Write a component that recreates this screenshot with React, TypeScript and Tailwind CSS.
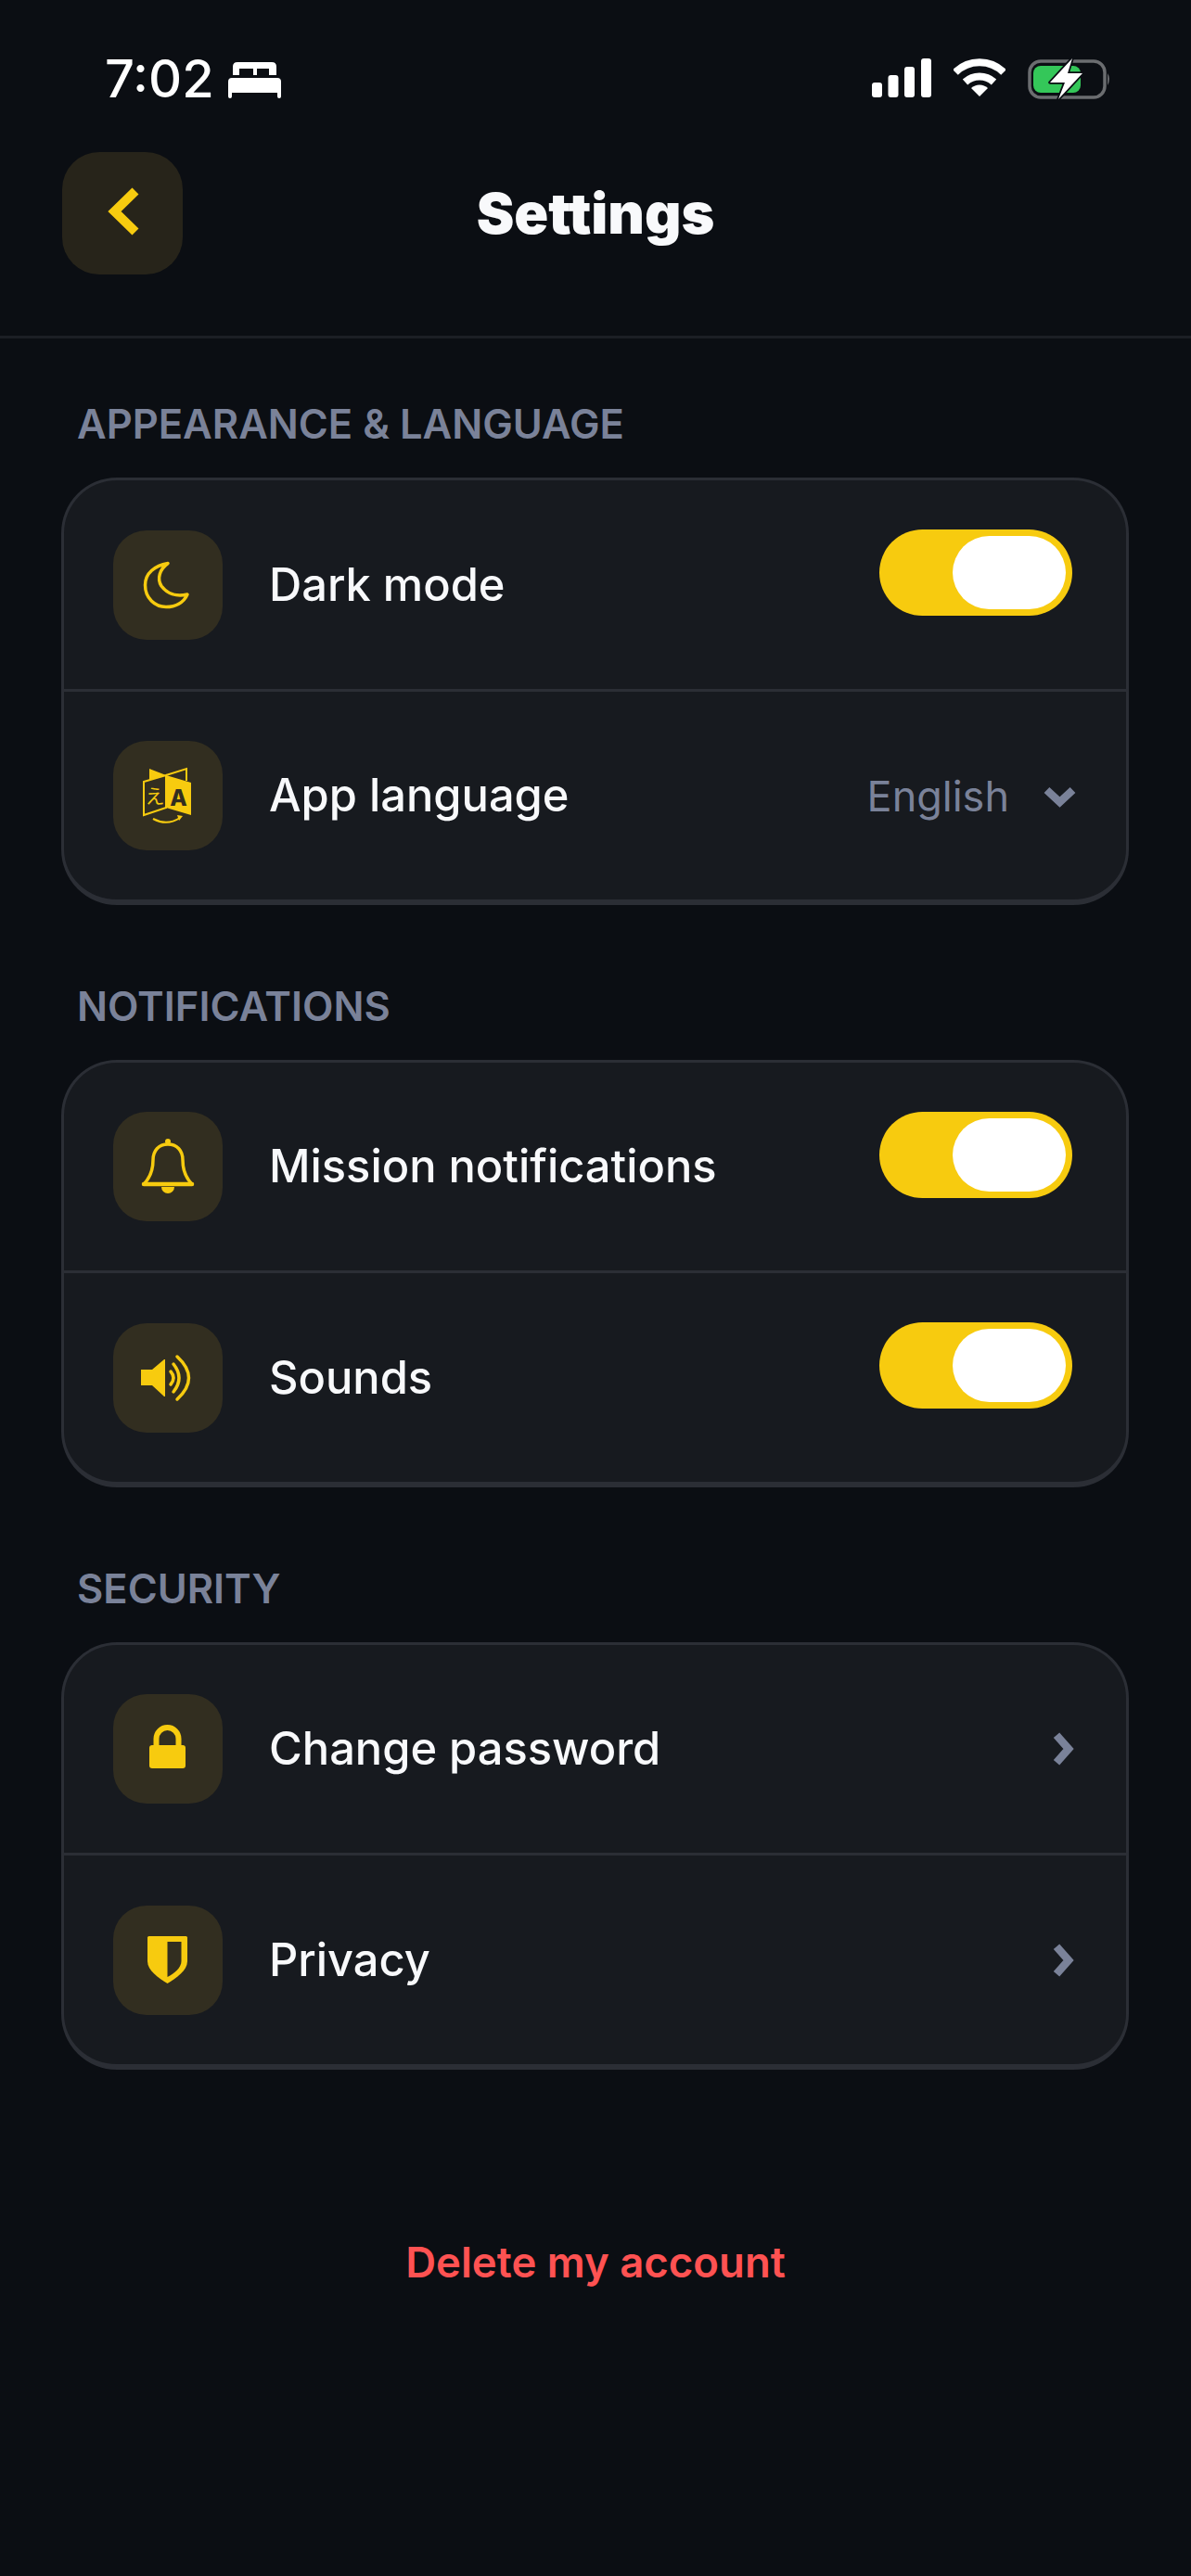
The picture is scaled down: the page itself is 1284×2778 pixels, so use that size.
import React from "react";

const Y = "#f7cb0f";
const BOX = "#322e20";

const MoonIcon = () => (
  <svg viewBox="0 0 118 118" className="w-full h-full" fill="none" stroke={Y} strokeWidth="3.5" strokeLinejoin="round">
    <path d="M59 35.5 C45 38 34.5 46 34.5 59 C34.5 73 45 82.5 57 82.5 C67 82.5 76 78 80 69 C68 72 58 68 52 60 C47 52 50 42 59 35.5 Z" />
  </svg>
);

const LanguageIcon = () => (
  <svg viewBox="0 0 118 118" className="w-full h-full" fill="none">
    <path d="M57 37 L79 30 V43" stroke={Y} strokeWidth="2" />
    <path d="M39 30 L57 37 L39 42 Z" fill={Y} />
    <path d="M33 44 L57 37 V72 L33 80 Z" fill={BOX} stroke={Y} strokeWidth="2" />
    <path d="M57 37 L84 45 V80 L57 72 Z" fill={Y} />
    <text x="70.5" y="70" textAnchor="middle" fontFamily="Inter, sans-serif" fontWeight="800" fontSize="24" fill={BOX}>
      A
    </text>
    <text x="45" y="67" textAnchor="middle" fontFamily="'Noto Sans CJK JP', sans-serif" fontSize="21" fill={Y}>
      え
    </text>
    <path d="M43 84 Q58 92 72 83" stroke={Y} strokeWidth="2" />
    <path d="M69 80 L75 81 L71 86 Z" fill={Y} />
  </svg>
);

const BellIcon = () => (
  <svg viewBox="0 0 118 118" className="w-full h-full" fill="none" stroke={Y} strokeWidth="3.5" strokeLinejoin="round">
    <circle cx="59" cy="32" r="3" fill={Y} stroke="none" />
    <path d="M33 78 C41 70 43 62 43 52 C43 42 49 35 59 35 C69 35 75 42 75 52 C75 62 77 70 85 78 Z" />
    <path d="M33 78 H85" strokeWidth="4.5" strokeLinecap="round" />
    <path d="M52 81 A7 7 0 0 0 66 81 Z" fill={Y} stroke="none" />
  </svg>
);

const SoundIcon = () => (
  <svg viewBox="0 0 118 118" className="w-full h-full" fill="none">
    <path d="M30 50 H42 L55 39 H56 V79 H55 L42 67 H30 Z" fill={Y} />
    <g stroke={Y} strokeWidth="3.5" strokeLinecap="round">
      <path d="M62 52 Q68 59 62 66" />
      <path d="M65 44 Q77 59 65 74" />
      <path d="M69 36 Q94 59 69 82" />
    </g>
  </svg>
);

const LockIcon = () => (
  <svg viewBox="0 0 118 118" className="w-full h-full" fill="none">
    <path d="M46.5 56 V48 A12 12 0 0 1 70.5 48 V56" stroke={Y} strokeWidth="6" />
    <rect x="39" y="55" width="39" height="25" rx="3" fill={Y} />
  </svg>
);

const ShieldIcon = () => (
  <svg viewBox="0 0 118 118" className="w-full h-full">
    <path d="M38.5 33 H78.5 Q80 33 80 34.5 V60 C80 70 68 78 58.5 84 C49 78 37 70 37 60 V34.5 Q37 33 38.5 33 Z" fill={Y} />
    <path d="M58.5 39 H73.5 V60 C73.5 67 66 73 58.5 77 Z" fill={BOX} />
  </svg>
);

const Toggle = () => (
  <div className="flex justify-end items-center w-[208px] h-[93px] mb-[26px] pr-[7px] rounded-full bg-[#f7cb0f]">
    <div className="w-[122px] h-[79px] rounded-full bg-white" />
  </div>
);

const ChevronRight = () => (
  <svg viewBox="0 0 22 36" className="w-[22px] h-[36px] overflow-visible" fill="none" stroke="#7a8299" strokeWidth="8.5" strokeLinejoin="miter">
    <path d="M3 3.3 L16 18 L3 32.7" />
  </svg>
);

const ChevronDown = () => (
  <svg viewBox="0 0 35 23" className="w-[35px] h-[23px] overflow-visible" fill="none" stroke="#7a8299" strokeWidth="8.5" strokeLinejoin="miter">
    <path d="M3.5 4 L17.5 17 L31.5 4" />
  </svg>
);

const Row: React.FC<{ icon: React.ReactNode; label: string; right: React.ReactNode; pr: string; h: string }> = ({ icon, label, right, pr, h }) => (
  <div className={`flex items-center pl-[53px] ${pr} ${h}`}>
    <div className="w-[118px] h-[118px] shrink-0 rounded-[36px] bg-[#322e20]">{icon}</div>
    <span className="ml-[50px] flex-1 text-[48.8px] leading-[60px] font-medium text-[#f8f9fb]">{label}</span>
    {right}
  </div>
);

const Section: React.FC<{ title: string; children: React.ReactNode }> = ({ title, children }) => (
  <section>
    <h2 className="pl-[17px] mb-[34px] text-[43.5px] leading-[48px] font-semibold text-[#7a8299]">{title}</h2>
    <div className="rounded-[60px] border-[3px] border-b-[6px] border-[#2b2e35] bg-[#171a1f]">{children}</div>
  </section>
);

const StatusBar = () => (
  <div className="flex justify-between items-start h-[164px] pt-[63px] pl-[113px] pr-[86px]">
    <div className="flex items-start">
      <span className="text-[56px] leading-[44px] font-medium text-white">7:02</span>
      <svg viewBox="0 0 57 39" className="w-[57px] h-[39px] ml-[15px] mt-[4px]" fill="white">
        <path d="M5 14 V5 Q5 0 10 0 H47 Q52 0 52 5 V14 Z" />
        <rect x="12" y="7" width="15" height="7" fill="#0b0e13" />
        <rect x="31" y="7" width="13" height="7" fill="#0b0e13" />
        <path d="M0 21 Q0 17 4 17 H53 Q57 17 57 21 V37 Q57 39 55 39 Q53 39 53 37 V33 H4 V37 Q4 39 2 39 Q0 39 0 37 Z" />
      </svg>
    </div>
    <div className="flex items-start gap-[24px]">
      <svg viewBox="0 0 64 42" className="w-[64px] h-[42px]" fill="white">
        <rect x="0" y="26" width="11" height="16" rx="3" />
        <rect x="17.5" y="18" width="11" height="24" rx="3" />
        <rect x="35" y="9" width="11" height="33" rx="3" />
        <rect x="53" y="0" width="11" height="42" rx="3" />
      </svg>
      <svg viewBox="0 0 56 42" className="w-[56px] h-[42px]" fill="none" stroke="white" strokeWidth="8">
        <path d="M2 15 A37 37 0 0 1 54 15" />
        <path d="M12.5 25.5 A23 23 0 0 1 43.5 25.5" />
        <path d="M28 41 L19 32 A13 13 0 0 1 37 32 Z" fill="white" stroke="none" />
      </svg>
      <svg viewBox="0 0 90 44" className="w-[90px] h-[44px]" fill="none">
        <rect x="2" y="3" width="81" height="39" rx="12" stroke="#6b6d70" strokeWidth="3.5" />
        <rect x="6" y="8" width="51" height="29" rx="8" fill="#34c759" />
        <path d="M86 16 Q90 22 86 29 Z" fill="#6b6d70" />
        <path d="M48 0 L24 26 H40 L33 44 L59 16 H43 Z" fill="white" stroke="#0b0e13" strokeWidth="3.5" paintOrder="stroke" strokeLinejoin="round" />
      </svg>
    </div>
  </div>
);

export default function App() {
  return (
    <div className="min-h-[2778px] bg-[#0b0e13] font-[Inter,sans-serif]">
      <StatusBar />
      <header className="pb-[66px] px-[67px] grid grid-cols-[130px_1fr_130px] items-center border-b-[3px] border-[#1c1f25]">
        <div className="flex items-center justify-center w-[130px] h-[132px] rounded-[40px] bg-[#27241a]">
          <svg viewBox="0 0 37 54" className="w-[37px] h-[54px] mb-[4px] overflow-visible" fill="none" stroke={Y} strokeWidth="10" strokeLinejoin="miter">
            <path d="M32 5 L9.5 27 L32 49" />
          </svg>
        </div>
        <h1 className="text-center text-[61px] leading-[70px] font-black text-[#f8f9fb]">Settings</h1>
        <div />
      </header>
      <main className="pt-[68px] pl-[66px] pr-[67px] flex flex-col gap-[85px]">
        <Section title="APPEARANCE & LANGUAGE">
          <Row icon={<MoonIcon />} label="Dark mode" right={<Toggle />} pr="pr-[58px]" h="h-[225px] border-b-[3px] border-[#2b2e35] box-content" />
          <Row
            icon={<LanguageIcon />}
            label="App language"
            pr="pr-[54px]"
            h="h-[224px]"
            right={
              <div className="flex items-center gap-[37px] mt-[2px]">
                <span className="text-[45px] leading-[60px] font-normal text-[#7a8299]">English</span>
                <ChevronDown />
              </div>
            }
          />
        </Section>
        <Section title="NOTIFICATIONS">
          <Row icon={<BellIcon />} label="Mission notifications" right={<Toggle />} pr="pr-[58px]" h="h-[224px] border-b-[3px] border-[#2b2e35] box-content" />
          <Row icon={<SoundIcon />} label="Sounds" right={<Toggle />} pr="pr-[58px]" h="h-[225px]" />
        </Section>
        <Section title="SECURITY">
          <Row icon={<LockIcon />} label="Change password" right={<ChevronRight />} pr="pr-[56px]" h="h-[224px] border-b-[3px] border-[#2b2e35] box-content" />
          <Row icon={<ShieldIcon />} label="Privacy" right={<ChevronRight />} pr="pr-[56px]" h="h-[225px]" />
        </Section>
      </main>
      <p className="mt-[178px] text-center text-[45.5px] leading-[60px] font-semibold text-[#ff5252]">Delete my account</p>
    </div>
  );
}
